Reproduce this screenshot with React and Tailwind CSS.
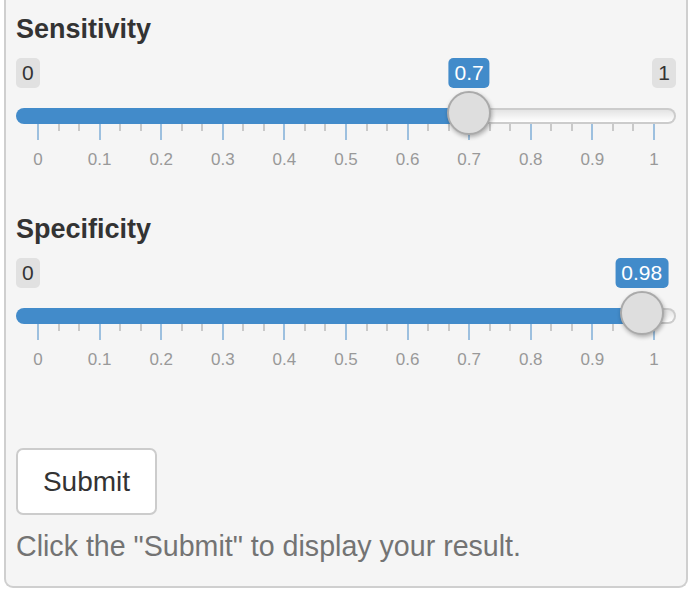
import React from 'react';

const ticks = Array.from({ length: 31 }, (_, i) => i);
const labels = ['0', '0.1', '0.2', '0.3', '0.4', '0.5', '0.6', '0.7', '0.8', '0.9', '1'];

// value 0..1 -> x inside the 660px track (handle radius 22)
const toX = (v) => 22 + v * 616;

function Slider({ title, value, showMax = true }) {
  const x = toX(value);
  return (
    <div className="flex flex-col">
      <div className="mt-[14px] text-[27px] leading-[30px] font-bold text-[#333]">{title}</div>

      <div className="relative mt-[14px] flex w-[660px] flex-col">
        {/* min / max */}
        <div className="flex h-[30px] items-start justify-between">
          <span className="rounded-[5px] bg-[#e1e1e1] px-[6px] py-[2px] text-[21px] leading-[26px] text-[#333]">0</span>
          {showMax && (
            <span className="rounded-[5px] bg-[#e1e1e1] px-[6px] py-[2px] text-[21px] leading-[26px] text-[#333]">1</span>
          )}
        </div>

        {/* track */}
        <div className="mt-[20px] flex h-[16px]">
          <div className="h-full rounded-l-full bg-[#428bca]" style={{ width: x }} />
          <div className="h-full flex-1 rounded-r-full border-y-2 border-r-2 border-[#cccccc] bg-gradient-to-b from-[#e4e4e4] to-white" />
        </div>

        {/* grid */}
        <div className="flex h-[16px] items-start justify-between px-[21px]">
          {ticks.map((i) => (
            <div
              key={i}
              className={i % 3 === 0 ? 'h-[16px] w-[2px] bg-[#9dc0df]' : 'h-[7px] w-[2px] bg-[#c9c9c9]'}
            />
          ))}
        </div>
        <div className="mt-[10px] flex justify-between px-[22px]">
          {labels.map((l) => (
            <div key={l} className="flex w-0 justify-center">
              <span className="text-[17px] leading-[20px] text-[#999]">{l}</span>
            </div>
          ))}
        </div>

        {/* value label + handle lie over the track */}
        <span
          className="absolute top-0 -translate-x-1/2 rounded-[5px] bg-[#428bca] px-[6px] py-[2px] text-[21px] leading-[26px] text-white"
          style={{ left: x }}
        >
          {value}
        </span>
        <div
          className="absolute top-[33px] h-[44px] w-[44px] rounded-full border-2 border-[#aaaaaa] bg-[#dedede] shadow-[1px_2px_4px_rgba(0,0,0,0.3)]"
          style={{ left: x - 22 }}
        />
      </div>
    </div>
  );
}

export default function App() {
  return (
    <div className="min-h-[590px] bg-white font-['Liberation_Sans',Arial,sans-serif]">
      <div className="ml-[4px] flex w-[684px] flex-col items-start rounded-b-[9px] border-x-2 border-b-2 border-[#cfcfcf] bg-[#f5f5f5] pb-[20px] pl-[10px] pr-[8px]">
        <Slider title="Sensitivity" value={0.7} />
        <div className="mt-[30px]">
          <Slider title="Specificity" value={0.98} showMax={false} />
        </div>
        <button className="mt-[78px] h-[67px] w-[141px] rounded-[7px] border-2 border-[#cccccc] bg-white text-[28px] text-[#333]">
          Submit
        </button>
        <p className="mt-[11px] text-[28.6px] leading-[40px] text-[#737373]">
          Click the "Submit" to display your result.
        </p>
      </div>
    </div>
  );
}
